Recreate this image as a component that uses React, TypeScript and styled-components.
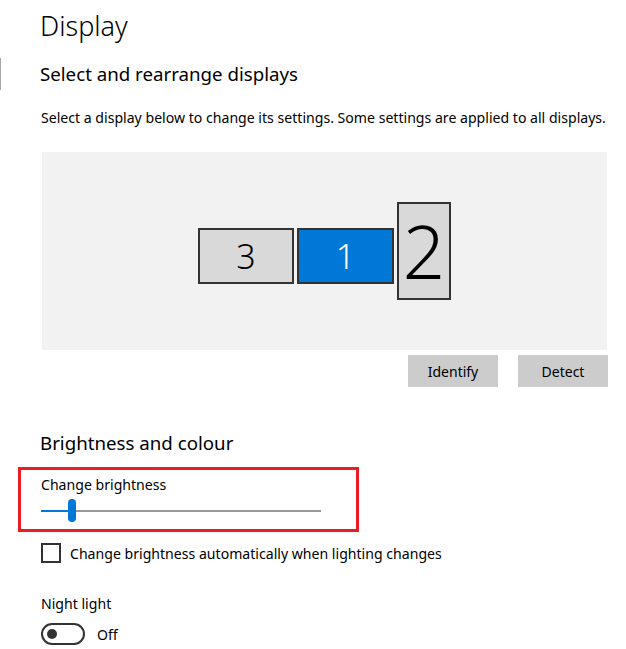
import React from 'react';
import styled, { createGlobalStyle } from 'styled-components';

const GlobalStyle = createGlobalStyle`
  html, body {
    margin: 0;
    padding: 0;
    background: #ffffff;
  }
  body {
    font-family: 'Noto Sans', 'Open Sans', sans-serif;
    color: #000000;
  }
`;

const Page = styled.div`
  width: 626px;
  height: 649px;
  overflow: hidden;
  padding: 8px 0 0 40px;
  box-sizing: border-box;
`;

const PageTitle = styled.h1`
  font-size: 27px;
  font-weight: 300;
  line-height: 36px;
  margin: 0;
`;

const SectionHeader = styled.h2<{ $marked?: boolean }>`
  font-size: 18.7px;
  font-weight: 400;
  line-height: 32px;
  margin: 14px 0 0 -40px;
  padding-left: 39px;
  border-left: 1px solid ${(p) => (p.$marked ? '#a6a6a6' : 'transparent')};
`;

const Description = styled.p`
  font-size: 14.1px;
  line-height: 20px;
  margin: 18px 0 0 1px;
  white-space: nowrap;
`;

const Arrangement = styled.div`
  margin: 24px 0 0 2px;
  width: 565px;
  height: 198px;
  background: #f2f2f2;
  display: flex;
  justify-content: center;
  align-items: flex-start;
  padding-top: 50px;
  box-sizing: border-box;
  gap: 3px;
`;

const Monitor = styled.div<{ $active?: boolean; $w: number; $h: number; $top: number; $size: number }>`
  width: ${(p) => p.$w}px;
  height: ${(p) => p.$h}px;
  margin-top: ${(p) => p.$top}px;
  box-sizing: border-box;
  border: 2px solid #333333;
  background: ${(p) => (p.$active ? '#0078d7' : '#d9d9d9')};
  color: ${(p) => (p.$active ? '#ffffff' : '#000000')};
  display: flex;
  align-items: center;
  justify-content: center;
  font-size: ${(p) => p.$size}px;
  font-weight: 300;
  line-height: 1;
`;

const ButtonRow = styled.div`
  display: flex;
  justify-content: flex-end;
  gap: 20px;
  width: 568px;
  margin-top: 5px;
`;

const Button = styled.button`
  width: 90px;
  height: 32px;
  border: none;
  background: #cccccc;
  font-family: inherit;
  font-size: 14px;
  color: #000000;
  padding: 0;
`;

const SubHeader = styled.h2`
  font-size: 18.7px;
  font-weight: 400;
  line-height: 28px;
  margin: 42px 0 0 0;
`;

const Highlight = styled.div`
  margin: 10px 0 0 -22px;
  width: 341px;
  height: 65px;
  box-sizing: border-box;
  border: 3px solid #ed1c24;
  padding: 5px 0 0 20px;
`;

const Label = styled.div`
  font-size: 14.1px;
  line-height: 20px;
`;

const Slider = styled.div`
  position: relative;
  width: 280px;
  height: 24px;
  margin-top: 4px;
  display: flex;
  align-items: center;
`;

const Track = styled.div<{ $fill: string; $w: number }>`
  height: 2px;
  width: ${(p) => p.$w}px;
  background: ${(p) => p.$fill};
`;

const Thumb = styled.div`
  position: absolute;
  top: 0;
  width: 8px;
  height: 23px;
  border-radius: 4px;
  background: #0078d7;
`;

const CheckRow = styled.label`
  display: flex;
  align-items: center;
  gap: 9px;
  margin: 11px 0 0 1px;
  font-size: 14.1px;
`;

const Box = styled.span`
  width: 20px;
  height: 20px;
  box-sizing: border-box;
  border: 2px solid #333333;
`;

const NightLabel = styled(Label)`
  margin: 31px 0 0 1px;
`;

const ToggleRow = styled.div`
  display: flex;
  align-items: center;
  gap: 12px;
  margin: 9px 0 0 1px;
  font-size: 14.1px;
`;

const Toggle = styled.span`
  width: 44px;
  height: 22px;
  box-sizing: border-box;
  border: 2px solid #333333;
  border-radius: 11px;
  display: flex;
  align-items: center;
  padding-left: 4px;
`;

const Knob = styled.span`
  width: 10px;
  height: 10px;
  border-radius: 50%;
  background: #333333;
`;

export default function App() {
  const brightness = 0.1;
  const trackW = 280;
  const thumbX = Math.round(brightness * trackW);

  return (
    <>
      <GlobalStyle />
      <Page>
        <PageTitle>Display</PageTitle>
        <SectionHeader $marked>Select and rearrange displays</SectionHeader>
        <Description>
          Select a display below to change its settings. Some settings are applied to all displays.
        </Description>
        <Arrangement>
          <Monitor $w={96} $h={56} $top={26} $size={34}>3</Monitor>
          <Monitor $active $w={97} $h={56} $top={26} $size={34}>1</Monitor>
          <Monitor $w={54} $h={98} $top={0} $size={74}>2</Monitor>
        </Arrangement>
        <ButtonRow>
          <Button>Identify</Button>
          <Button>Detect</Button>
        </ButtonRow>
        <SubHeader>Brightness and colour</SubHeader>
        <Highlight>
          <Label>Change brightness</Label>
          <Slider>
            <Track $fill="#0078d7" $w={thumbX} />
            <Track $fill="#999999" $w={trackW - thumbX} />
            <Thumb style={{ left: thumbX - 1 }} />
          </Slider>
        </Highlight>
        <CheckRow>
          <Box />
          Change brightness automatically when lighting changes
        </CheckRow>
        <NightLabel>Night light</NightLabel>
        <ToggleRow>
          <Toggle>
            <Knob />
          </Toggle>
          Off
        </ToggleRow>
      </Page>
    </>
  );
}
